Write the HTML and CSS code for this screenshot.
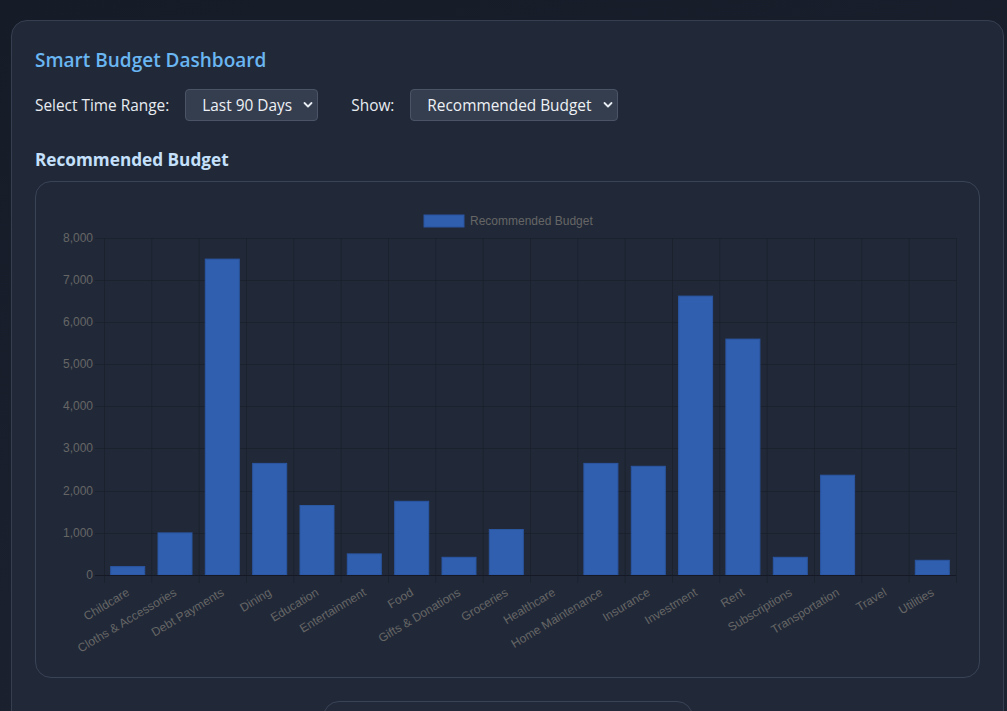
FILE: index.html
```html
<!DOCTYPE html>
<html lang="en">
<head>
<meta charset="utf-8">
<title>Smart Budget Dashboard</title>
<link rel="stylesheet" href="styles.css">
</head>
<body>
<div class="card">
  <h1 class="title">Smart Budget Dashboard</h1>
  <div class="controls">
    <label class="ctl-label" for="range">Select Time Range:</label>
    <div class="select-wrap range">
      <select id="range" class="select"><option>Last 90 Days</option></select>
      <svg class="chev" width="10" height="8" viewBox="0 0 10 8"><path d="M1.5 2 L5 5.5 L8.5 2" fill="none" stroke="#e8edf3" stroke-width="1.8" stroke-linecap="round" stroke-linejoin="round"/></svg>
    </div>
    <label class="ctl-label show" for="show">Show:</label>
    <div class="select-wrap mode">
      <select id="show" class="select"><option>Recommended Budget</option></select>
      <svg class="chev" width="10" height="8" viewBox="0 0 10 8"><path d="M1.5 2 L5 5.5 L8.5 2" fill="none" stroke="#e8edf3" stroke-width="1.8" stroke-linecap="round" stroke-linejoin="round"/></svg>
    </div>
  </div>
  <h2 class="section">Recommended Budget</h2>
  <div class="chart-box">
    <svg class="chart" width="943" height="495" viewBox="0 0 943 495" font-family="'Liberation Sans', Arial, sans-serif" font-size="12">
      <!-- legend -->
      <rect x="388" y="33" width="40" height="12" fill="#2f5fae" stroke="#2b55a0" stroke-width="1"/>
      <text x="434" y="43" fill="#666">Recommended Budget</text>
      <!-- horizontal grid -->
      <g stroke="#1a202b" stroke-opacity="0.7" stroke-width="1">
        <line x1="59" y1="56.5" x2="920" y2="56.5"/>
        <line x1="59" y1="98.5" x2="920" y2="98.5"/>
        <line x1="59" y1="140.5" x2="920" y2="140.5"/>
        <line x1="59" y1="182.5" x2="920" y2="182.5"/>
        <line x1="59" y1="224.5" x2="920" y2="224.5"/>
        <line x1="59" y1="266.5" x2="920" y2="266.5"/>
        <line x1="59" y1="309.5" x2="920" y2="309.5"/>
        <line x1="59" y1="351.5" x2="920" y2="351.5"/>
      </g>
      <!-- vertical grid -->
      <g stroke="#1a202b" stroke-opacity="0.7" stroke-width="1">
        <line x1="68.5" y1="56" x2="68.5" y2="401"/>
        <line x1="115.8" y1="56" x2="115.8" y2="401"/>
        <line x1="163.2" y1="56" x2="163.2" y2="401"/>
        <line x1="210.5" y1="56" x2="210.5" y2="401"/>
        <line x1="257.8" y1="56" x2="257.8" y2="401"/>
        <line x1="305.2" y1="56" x2="305.2" y2="401"/>
        <line x1="352.5" y1="56" x2="352.5" y2="401"/>
        <line x1="399.8" y1="56" x2="399.8" y2="401"/>
        <line x1="447.2" y1="56" x2="447.2" y2="401"/>
        <line x1="494.5" y1="56" x2="494.5" y2="401"/>
        <line x1="541.8" y1="56" x2="541.8" y2="401"/>
        <line x1="589.2" y1="56" x2="589.2" y2="401"/>
        <line x1="636.5" y1="56" x2="636.5" y2="401"/>
        <line x1="683.8" y1="56" x2="683.8" y2="401"/>
        <line x1="731.2" y1="56" x2="731.2" y2="401"/>
        <line x1="778.5" y1="56" x2="778.5" y2="401"/>
        <line x1="825.8" y1="56" x2="825.8" y2="401"/>
        <line x1="873.2" y1="56" x2="873.2" y2="401"/>
        <line x1="920.5" y1="56" x2="920.5" y2="401"/>
      </g>
      <!-- y labels -->
      <g fill="#666" text-anchor="end">
        <text x="57" y="60">8,000</text>
        <text x="57" y="102">7,000</text>
        <text x="57" y="144">6,000</text>
        <text x="57" y="186">5,000</text>
        <text x="57" y="228">4,000</text>
        <text x="57" y="270">3,000</text>
        <text x="57" y="313">2,000</text>
        <text x="57" y="355">1,000</text>
        <text x="57" y="397">0</text>
      </g>
      <!-- bars -->
      <g fill="#2f5fae" stroke="#2b56a2" stroke-width="1">
        <rect x="74.7" y="384.6" width="34" height="8.4"/>
        <rect x="122" y="350.9" width="34" height="42.1"/>
        <rect x="169.3" y="77.1" width="34" height="315.9"/>
        <rect x="216.7" y="281.4" width="34" height="111.6"/>
        <rect x="264" y="323.5" width="34" height="69.5"/>
        <rect x="311.3" y="371.9" width="34" height="21.1"/>
        <rect x="358.7" y="319.3" width="34" height="73.7"/>
        <rect x="406" y="375.3" width="34" height="17.7"/>
        <rect x="453.3" y="347.5" width="34" height="45.5"/>
        <rect x="547.9" y="281.4" width="34" height="111.6"/>
        <rect x="595.3" y="284.3" width="34" height="108.7"/>
        <rect x="642.6" y="114.1" width="34" height="278.9"/>
        <rect x="689.9" y="157.1" width="34" height="235.9"/>
        <rect x="737.3" y="375.3" width="34" height="17.7"/>
        <rect x="784.6" y="293.2" width="34" height="99.8"/>
        <rect x="879.3" y="378.3" width="34" height="14.7"/>
      </g>
      <!-- zero axis -->
      <line x1="59" y1="393.5" x2="920" y2="393.5" stroke="#141925" stroke-width="1"/>
      <!-- x labels -->
      <g fill="#666" text-anchor="end">
        <text transform="translate(92,409) rotate(-31)" dy="0.35em">Childcare</text>
        <text transform="translate(139.3,409) rotate(-31)" dy="0.35em">Cloths &amp; Accessories</text>
        <text transform="translate(186.7,409) rotate(-31)" dy="0.35em">Debt Payments</text>
        <text transform="translate(234,409) rotate(-31)" dy="0.35em">Dining</text>
        <text transform="translate(281.3,409) rotate(-31)" dy="0.35em">Education</text>
        <text transform="translate(328.7,409) rotate(-31)" dy="0.35em">Entertainment</text>
        <text transform="translate(376,409) rotate(-31)" dy="0.35em">Food</text>
        <text transform="translate(423.3,409) rotate(-31)" dy="0.35em">Gifts &amp; Donations</text>
        <text transform="translate(470.7,409) rotate(-31)" dy="0.35em">Groceries</text>
        <text transform="translate(518,409) rotate(-31)" dy="0.35em">Healthcare</text>
        <text transform="translate(565.3,409) rotate(-31)" dy="0.35em">Home Maintenance</text>
        <text transform="translate(612.7,409) rotate(-31)" dy="0.35em">Insurance</text>
        <text transform="translate(660,409) rotate(-31)" dy="0.35em">Investment</text>
        <text transform="translate(707.3,409) rotate(-31)" dy="0.35em">Rent</text>
        <text transform="translate(754.7,409) rotate(-31)" dy="0.35em">Subscriptions</text>
        <text transform="translate(802,409) rotate(-31)" dy="0.35em">Transportation</text>
        <text transform="translate(849.3,409) rotate(-31)" dy="0.35em">Travel</text>
        <text transform="translate(896.7,409) rotate(-31)" dy="0.35em">Utilities</text>
      </g>
    </svg>
  </div>
  <div class="next-box"></div>
</div>
</body>
</html>
```

FILE: styles.css
```css
* { box-sizing: border-box; }
html, body { margin: 0; padding: 0; }
body {
  background: linear-gradient(160deg, #151b27 0%, #1a202d 50%, #1c2331 100%);
  min-height: 711px;
  overflow: hidden;
  font-family: "Open Sans", "Noto Sans", sans-serif;
  color: #e2e8f0;
  padding: 20px 3px 0 11px;
}
.card {
  width: 993px;
  background: #212938;
  border: 1px solid #363f50;
  border-radius: 16px;
  padding: 23px 23px 40px;
}
.title {
  margin: 0 0 13px;
  font-size: 19px;
  line-height: 32px;
  font-weight: 600;
  color: #6ab6f2;
}
.controls {
  display: flex;
  align-items: center;
  height: 32px;
}
.ctl-label {
  font-size: 15.4px;
  color: #e8ecf1;
  margin-right: 16px;
}
.ctl-label.show { margin-left: 33px; margin-right: 16px; }
.select-wrap { position: relative; height: 32px; }
.select-wrap.range { width: 133px; }
.select-wrap.mode { width: 208px; }
.select {
  appearance: none;
  -webkit-appearance: none;
  width: 100%;
  height: 32px;
  background: #353e4f;
  border: 1px solid #4a5466;
  border-radius: 4px;
  color: #eef1f5;
  font-family: inherit;
  font-size: 15.4px;
  padding: 0 0 0 16px;
}
.chev {
  position: absolute;
  right: 5px;
  top: 12px;
  pointer-events: none;
}
.section {
  margin: 27px 0 9px;
  font-size: 17.2px;
  line-height: 24px;
  font-weight: 700;
  color: #c5e0fb;
}
.chart-box {
  height: 497px;
  border: 1px solid #394356;
  border-radius: 16px;
  background: #212938;
}
.chart { display: block; }
.next-box {
  width: 370px;
  height: 120px;
  margin: 23px auto 0;
  border: 1px solid #394356;
  border-radius: 16px;
  background: #222a39;
}
```
